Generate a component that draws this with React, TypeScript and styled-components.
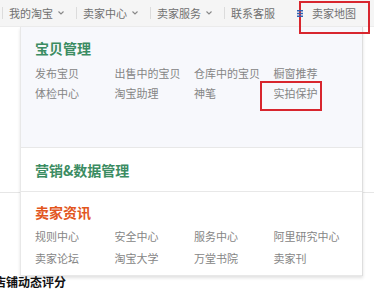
import styled, { createGlobalStyle } from "styled-components";

const GlobalStyle = createGlobalStyle`
  html, body {
    margin: 0;
    padding: 0;
    background: #fff;
    font-family: "Noto Sans CJK SC", "Liberation Sans", sans-serif;
    overflow: hidden;
  }
`;

const Page = styled.div`
  position: relative;
  width: 374px;
  height: 306px;
  overflow: hidden;
`;

const TopBar = styled.div`
  height: 26px;
  display: flex;
  align-items: center;
  padding-left: 2px;
  background: #f5f5f5;
  border-bottom: 1px solid #ececec;
  font-size: 11px;
  color: #707070;
`;

const Sep = styled.span`
  width: 1px;
  height: 12px;
  background: #dcdcdc;
`;

const NavItem = styled.div<{ $last?: boolean }>`
  display: flex;
  align-items: center;
  gap: 5px;
  padding: 0 ${(p) => (p.$last ? 0 : 12)}px 0 6px;
  line-height: 26px;
  white-space: nowrap;
`;

const MapLink = styled.div`
  position: relative;
  z-index: 5;
  display: flex;
  align-items: center;
  gap: 9px;
  margin-left: 22px;
  line-height: 26px;
  white-space: nowrap;
`;

const Body = styled.div`
  height: 165px;
  border-bottom: 1px solid #e6e6e6;
`;

const Rating = styled.div`
  margin: 82px 0 0 -6px;
  font-size: 12px;
  font-weight: 700;
  color: #111;
  line-height: 14px;
`;

const Dropdown = styled.div`
  position: absolute;
  left: 20px;
  top: 27px;
  width: 341px;
  height: 249px;
  background: #fff;
  border-left: 1px solid #e8e8e8;
  border-right: 1px solid #dedede;
  box-shadow: 0 2px 3px rgba(0, 0, 0, 0.12);
  z-index: 2;
`;

const Section = styled.div<{ $tint?: boolean; $h: number; $pt: number }>`
  height: ${(p) => p.$h}px;
  padding: ${(p) => p.$pt}px 0 0 14px;
  box-sizing: border-box;
  background: ${(p) => (p.$tint ? "#f7f8fc" : "#fff")};
  border-bottom: 1px solid #e8e8e8;
  &:last-child {
    border-bottom: none;
  }
`;

const Title = styled.div<{ $color: string; $mb: number }>`
  font-size: 14px;
  font-weight: 700;
  line-height: 20px;
  color: ${(p) => p.$color};
  margin-bottom: ${(p) => p.$mb}px;
`;

const LinkGrid = styled.div<{ $row: number }>`
  display: grid;
  grid-template-columns: repeat(4, 79.5px);
  grid-auto-rows: ${(p) => p.$row}px;
  font-size: 11px;
  color: #858585;
  align-items: center;
  white-space: nowrap;
`;

const Highlight = styled.div<{ $l: number; $t: number; $w: number; $h: number }>`
  position: absolute;
  left: ${(p) => p.$l}px;
  top: ${(p) => p.$t}px;
  width: ${(p) => p.$w}px;
  height: ${(p) => p.$h}px;
  border: 2px solid #d8262e;
  box-sizing: border-box;
  pointer-events: none;
  z-index: 4;
`;

const Chevron = () => (
  <svg width="6" height="4" viewBox="0 0 6 4">
    <polyline points="0.5,0.5 3,3 5.5,0.5" fill="none" stroke="#888" strokeWidth="1.1" />
  </svg>
);

const MenuIcon = () => (
  <svg width="6" height="7" viewBox="0 0 6 7">
    <rect x="0" y="0" width="6" height="1.5" fill="#2f5fb3" />
    <rect x="0" y="2.75" width="6" height="1.5" fill="#2f5fb3" />
    <rect x="0" y="5.5" width="6" height="1.5" fill="#2f5fb3" />
  </svg>
);

const goods = ["发布宝贝", "出售中的宝贝", "仓库中的宝贝", "橱窗推荐", "体检中心", "淘宝助理", "神笔", "实拍保护"];
const news = ["规则中心", "安全中心", "服务中心", "阿里研究中心", "卖家论坛", "淘宝大学", "万堂书院", "卖家刊"];

export default function App() {
  return (
    <Page>
      <GlobalStyle />
      <TopBar>
        <Sep />
        <NavItem>
          我的淘宝 <Chevron />
        </NavItem>
        <Sep />
        <NavItem>
          卖家中心 <Chevron />
        </NavItem>
        <Sep />
        <NavItem>
          卖家服务 <Chevron />
        </NavItem>
        <Sep />
        <NavItem $last>联系客服</NavItem>
        <MapLink>
          <MenuIcon />
          卖家地图
        </MapLink>
      </TopBar>
      <Body />
      <Rating>店铺动态评分</Rating>

      <Dropdown>
        <Section $tint $h={121} $pt={11}>
          <Title $color="#3b8c62" $mb={5}>宝贝管理</Title>
          <LinkGrid $row={20}>
            {goods.map((g) => (
              <span key={g}>{g}</span>
            ))}
          </LinkGrid>
        </Section>
        <Section $h={44} $pt={12}>
          <Title $color="#3b8c62" $mb={0}>营销&amp;数据管理</Title>
        </Section>
        <Section $h={84} $pt={10}>
          <Title $color="#e2561d" $mb={3}>卖家资讯</Title>
          <LinkGrid $row={22}>
            {news.map((n) => (
              <span key={n}>{n}</span>
            ))}
          </LinkGrid>
        </Section>
        <Highlight $l={239} $t={54} $w={62} $h={30} />
      </Dropdown>
      <Highlight $l={299} $t={1} $w={71} $h={33} />
    </Page>
  );
}
